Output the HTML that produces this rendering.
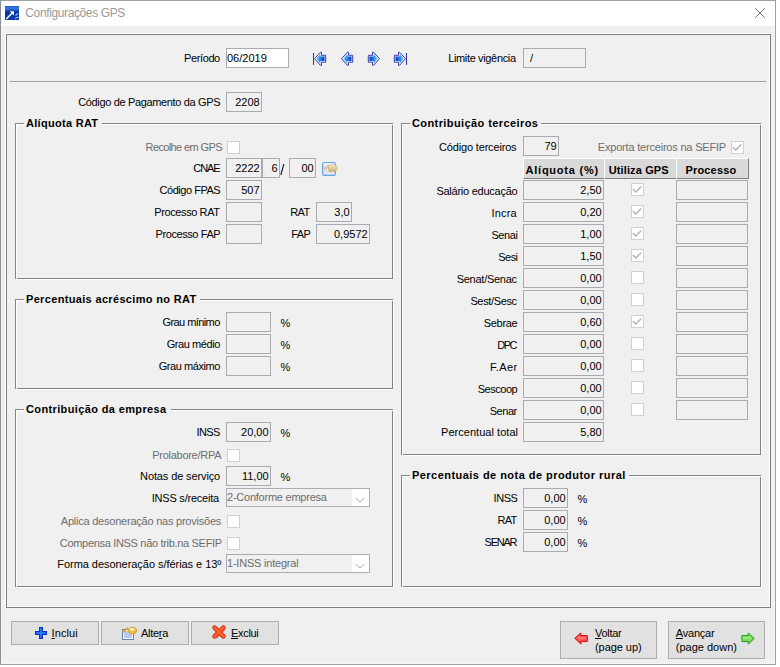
<!DOCTYPE html>
<html><head><meta charset="utf-8"><style>
*{margin:0;padding:0;box-sizing:content-box}
html,body{width:780px;height:667px;overflow:hidden;background:#fff}
body{position:relative;font-family:"Liberation Sans", sans-serif;font-size:11px;color:#000}
.win{position:absolute;left:0;top:0;width:774px;height:663px;border:1px solid #a0a0a0;border-left-color:#8a9099;background:#f0f0f0;box-shadow:inset 1px 0 0 #f6f6f6,inset -1px -1px 0 #f6f6f6}
.tb{position:absolute;left:1px;top:1px;width:774px;height:25px;background:#fff}
.t{position:absolute;line-height:13px;white-space:nowrap}
.bx{position:absolute;border:1px solid #adadad}
.cb{position:absolute;width:11px;height:11px;border:1px solid #d0d0d0;background:#fff}
.ic{position:absolute;overflow:visible}
.gg{position:absolute;border:1px solid #848484}
.gw{position:absolute;border:1px solid #fff}
.sep{position:absolute;height:1px;background:#a0a0a0}
.hc{position:absolute;background:#d9d9d9;border-top:1px solid #fff;border-left:1px solid #fff;border-bottom:1px solid #808080}
.btn{position:absolute;border:1px solid #adadad;background:#e1e1e1}
</style></head><body>
<div class="win"></div>
<div class="tb"></div>
<svg class="ic" style="left:5px;top:6px" width="15" height="15" viewBox="0 0 15 15">
<defs><linearGradient id="tg" x1="0" y1="0" x2="0" y2="1"><stop offset="0" stop-color="#1850c8"/><stop offset="0.12" stop-color="#3a78e0"/><stop offset="0.3" stop-color="#2a64d0"/><stop offset="0.36" stop-color="#0838a8"/><stop offset="1" stop-color="#0a3aa8"/></linearGradient></defs>
<rect x="0" y="0" width="14" height="14" fill="url(#tg)"/>
<path d="M1.2 13 L7.5 6.7" stroke="#fff" stroke-width="1.5"/>
<path d="M4.8 5.2 L9 5.2 L9 9.4 Z" fill="#fff"/>
<path d="M10.5 9.5 L13 7.5 M10 12.5 L13.5 11" stroke="#a8c4f0" stroke-width="1.2"/>
</svg>
<svg class="ic" style="left:755px;top:8px" width="11" height="11"><path d="M0.3 0.3 L9.7 9.7 M9.7 0.3 L0.3 9.7" stroke="#707070" stroke-width="1"/></svg>
<div style="position:absolute;left:5px;top:33px;width:763px;height:572px;border:1px solid #fff"></div>
<div style="position:absolute;left:6px;top:34px;width:763px;height:572px;border:1px solid #7f7f7f"></div>
<div class="t" style="left:25.30px;top:7px;color:#9a9a9a;letter-spacing:-0.378px;font-size:12px;">Configurações GPS</div>
<div class="t" style="left:184.10px;top:52px;color:#000;letter-spacing:-0.402px;">Período</div>
<div class="bx" style="left:226px;top:48px;width:61px;height:18px;background:#fff;border-color:#abadb3"></div>
<div class="t" style="left:227.00px;top:52px;color:#000;">06/2019</div>
<svg class="ic" style="left:312px;top:51px" width="16" height="16" viewBox="0 0 16 16"><defs>
<linearGradient id="ag" x1="0" y1="0" x2="1" y2="0"><stop offset="0" stop-color="#9ad0ff"/><stop offset="0.4" stop-color="#3a90f0"/><stop offset="1" stop-color="#0038c0"/></linearGradient>
<linearGradient id="agr" x1="1" y1="0" x2="0" y2="0"><stop offset="0" stop-color="#9ad0ff"/><stop offset="0.4" stop-color="#3a90f0"/><stop offset="1" stop-color="#0038c0"/></linearGradient>
</defs><path d="M1.5 2 V14" stroke="#3c3ca8" stroke-width="1.1"/><path d="M2.5 7.7 L8.5 1.2 L9.5 1.2 L9.5 4.3 L13.7 4.3 L13.7 11.2 L9.5 11.2 L9.5 14.4 L8.5 14.4 Z" fill="#e6f2ff" stroke="#3c3ca8" stroke-width="1" stroke-linejoin="miter"/><path d="M4.2 7.7 L8.3 3.3 L8.3 5.5 L12.5 5.5 L12.5 10 L8.3 10 L8.3 12.2 Z" fill="url(#ag)"/></svg>
<svg class="ic" style="left:339px;top:51px" width="16" height="16" viewBox="0 0 16 16"><path d="M2.5 7.7 L8.5 1.2 L9.5 1.2 L9.5 4.3 L13.7 4.3 L13.7 11.2 L9.5 11.2 L9.5 14.4 L8.5 14.4 Z" fill="#e6f2ff" stroke="#3c3ca8" stroke-width="1" stroke-linejoin="miter"/><path d="M4.2 7.7 L8.3 3.3 L8.3 5.5 L12.5 5.5 L12.5 10 L8.3 10 L8.3 12.2 Z" fill="url(#ag)"/></svg>
<svg class="ic" style="left:366px;top:51px" width="16" height="16" viewBox="0 0 16 16"><path d="M13.5 7.7 L7.5 1.2 L6.5 1.2 L6.5 4.3 L2.3 4.3 L2.3 11.2 L6.5 11.2 L6.5 14.4 L7.5 14.4 Z" fill="#e6f2ff" stroke="#3c3ca8" stroke-width="1" stroke-linejoin="miter"/><path d="M11.8 7.7 L7.7 3.3 L7.7 5.5 L3.5 5.5 L3.5 10 L7.7 10 L7.7 12.2 Z" fill="url(#agr)"/></svg>
<svg class="ic" style="left:392px;top:51px" width="16" height="16" viewBox="0 0 16 16"><path d="M13.5 7.7 L7.5 1.2 L6.5 1.2 L6.5 4.3 L2.3 4.3 L2.3 11.2 L6.5 11.2 L6.5 14.4 L7.5 14.4 Z" fill="#e6f2ff" stroke="#3c3ca8" stroke-width="1" stroke-linejoin="miter"/><path d="M11.8 7.7 L7.7 3.3 L7.7 5.5 L3.5 5.5 L3.5 10 L7.7 10 L7.7 12.2 Z" fill="url(#agr)"/><path d="M14.5 2 V14" stroke="#3c3ca8" stroke-width="1.1"/></svg>
<div class="t" style="left:448.20px;top:52px;color:#000;letter-spacing:-0.353px;">Limite vigência</div>
<div class="bx" style="left:523px;top:48px;width:61px;height:18px;background:#f0f0f0;border-color:#a9abb0"></div>
<div class="t" style="left:530.00px;top:52px;color:#000;">/</div>
<div class="sep" style="left:10px;top:81px;width:756px"></div>
<div class="t" style="left:78.20px;top:96px;color:#000;letter-spacing:-0.348px;">Código de Pagamento da GPS</div>
<div class="bx" style="left:226px;top:92px;width:34px;height:18px;background:#f0f0f0;border-color:#a9abb0"></div>
<div class="t" style="left:235.15px;top:96px;color:#000;">2208</div>
<div class="gg" style="left:15px;top:123px;width:376px;height:154px"></div>
<div class="gw" style="left:16px;top:124px;width:376px;height:154px"></div>
<div style="position:absolute;left:24px;top:120px;width:78px;height:6px;background:#f0f0f0"></div>
<div class="t" style="left:26.00px;top:117px;color:#000;font-weight:bold;letter-spacing:0.289px;">Alíquota RAT</div>
<div class="t" style="left:145.60px;top:141px;color:#6d6d6d;letter-spacing:-0.619px;">Recolhe em GPS</div>
<div class="cb" style="left:227px;top:141px"></div>
<div class="t" style="left:193.30px;top:162px;color:#000;letter-spacing:-1.075px;">CNAE</div>
<div class="bx" style="left:226px;top:158px;width:34px;height:18px;background:#f0f0f0;border-color:#a9abb0"></div>
<div class="t" style="left:235.15px;top:162px;color:#000;">2222</div>
<div class="bx" style="left:262px;top:158px;width:16px;height:18px;background:#f0f0f0;border-color:#a9abb0"></div>
<div class="t" style="left:271.50px;top:162px;color:#000;">6</div>
<svg class="ic" style="left:278px;top:162px" width="8" height="16"><path d="M5.9 2 L2.8 13" stroke="#101030" stroke-width="1.1"/></svg>
<div class="bx" style="left:289px;top:158px;width:25px;height:18px;background:#f0f0f0;border-color:#a9abb0"></div>
<div class="t" style="left:301.38px;top:162px;color:#000;">00</div>
<svg class="ic" style="left:322px;top:162px" width="14" height="14" viewBox="0 0 14 14"><defs><linearGradient id="hb" x1="0" y1="0" x2="0" y2="1"><stop offset="0" stop-color="#dfe4f6"/><stop offset="1" stop-color="#ece0ee"/></linearGradient>
<linearGradient id="hh" x1="0" y1="0" x2="0" y2="1"><stop offset="0" stop-color="#f4e8c8"/><stop offset="1" stop-color="#cdb070"/></linearGradient></defs>
<rect x="0.6" y="0.6" width="12.8" height="12.8" rx="1.6" fill="url(#hb)" stroke="#5aaae8" stroke-width="1.2"/>
<rect x="1.5" y="1.3" width="11" height="1.4" fill="#f4f8ff"/>
<path d="M2.3 7.2 L7 3.8" stroke="#d4b878" stroke-width="2.4" stroke-dasharray="1 0.6"/>
<ellipse cx="10.8" cy="6" rx="4.4" ry="3.6" fill="url(#hh)" stroke="#c8a868" stroke-width="0.5"/>
<path d="M6.5 8.5 L9 10" stroke="#c8a868" stroke-width="1.2"/></svg>
<div class="t" style="left:159.60px;top:184px;color:#000;letter-spacing:-0.479px;">Código FPAS</div>
<div class="bx" style="left:226px;top:180px;width:34px;height:18px;background:#f0f0f0;border-color:#a9abb0"></div>
<div class="t" style="left:241.26px;top:184px;color:#000;">507</div>
<div class="t" style="left:154.30px;top:206px;color:#000;letter-spacing:-0.398px;">Processo RAT</div>
<div class="bx" style="left:226px;top:202px;width:34px;height:18px;background:#f0f0f0;border-color:#a9abb0"></div>
<div class="t" style="left:290.30px;top:206px;color:#000;letter-spacing:-0.632px;">RAT</div>
<div class="bx" style="left:316px;top:202px;width:34px;height:18px;background:#f0f0f0;border-color:#a9abb0"></div>
<div class="t" style="left:334.33px;top:206px;color:#000;">3,0</div>
<div class="t" style="left:155.50px;top:228px;color:#000;letter-spacing:-0.414px;">Processo FAP</div>
<div class="bx" style="left:226px;top:224px;width:34px;height:18px;background:#f0f0f0;border-color:#a9abb0"></div>
<div class="t" style="left:291.30px;top:228px;color:#000;letter-spacing:-0.625px;">FAP</div>
<div class="bx" style="left:316px;top:224px;width:52px;height:18px;background:#f0f0f0;border-color:#a9abb0"></div>
<div class="t" style="left:333.97px;top:228px;color:#000;">0,9572</div>
<div class="gg" style="left:15px;top:299px;width:376px;height:88px"></div>
<div class="gw" style="left:16px;top:300px;width:376px;height:88px"></div>
<div style="position:absolute;left:24px;top:296px;width:176px;height:6px;background:#f0f0f0"></div>
<div class="t" style="left:26.00px;top:293px;color:#000;font-weight:bold;letter-spacing:0.335px;">Percentuais acréscimo no RAT</div>
<div class="t" style="left:162.50px;top:316px;color:#000;letter-spacing:-0.575px;">Grau mínimo</div>
<div class="bx" style="left:226px;top:312px;width:43px;height:18px;background:#f0f0f0;border-color:#a9abb0"></div>
<div class="t" style="left:280.40px;top:317px;color:#000;">%</div>
<div class="t" style="left:166.70px;top:338px;color:#000;letter-spacing:-0.428px;">Grau médio</div>
<div class="bx" style="left:226px;top:334px;width:43px;height:18px;background:#f0f0f0;border-color:#a9abb0"></div>
<div class="t" style="left:280.40px;top:339px;color:#000;">%</div>
<div class="t" style="left:158.70px;top:360px;color:#000;letter-spacing:-0.440px;">Grau máximo</div>
<div class="bx" style="left:226px;top:356px;width:43px;height:18px;background:#f0f0f0;border-color:#a9abb0"></div>
<div class="t" style="left:280.40px;top:361px;color:#000;">%</div>
<div class="gg" style="left:15px;top:409px;width:376px;height:176px"></div>
<div class="gw" style="left:16px;top:410px;width:376px;height:176px"></div>
<div style="position:absolute;left:24px;top:406px;width:147px;height:6px;background:#f0f0f0"></div>
<div class="t" style="left:26.00px;top:403px;color:#000;font-weight:bold;letter-spacing:0.368px;">Contribuição da empresa</div>
<div class="t" style="left:196.60px;top:426px;color:#000;letter-spacing:-0.612px;">INSS</div>
<div class="bx" style="left:226px;top:422px;width:43px;height:18px;background:#f0f0f0;border-color:#a9abb0"></div>
<div class="t" style="left:241.09px;top:426px;color:#000;">20,00</div>
<div class="t" style="left:280.40px;top:427px;color:#000;">%</div>
<div class="t" style="left:152.20px;top:449px;color:#6d6d6d;letter-spacing:-0.268px;">Prolabore/RPA</div>
<div class="cb" style="left:227px;top:449px"></div>
<div class="t" style="left:140.10px;top:470px;color:#000;letter-spacing:-0.121px;">Notas de serviço</div>
<div class="bx" style="left:226px;top:466px;width:43px;height:18px;background:#f0f0f0;border-color:#a9abb0"></div>
<div class="t" style="left:241.91px;top:470px;color:#000;">11,00</div>
<div class="t" style="left:280.40px;top:471px;color:#000;">%</div>
<div class="t" style="left:151.70px;top:492px;color:#000;letter-spacing:-0.214px;">INSS s/receita</div>
<div class="bx" style="left:226px;top:488px;width:142px;height:17px;background:#f0f0f0;border-color:#abadb3"></div>
<div style="position:absolute;left:352px;top:489px;width:17px;height:17px;background:#fff"></div>
<svg class="ic" style="left:352px;top:489px" width="17" height="17"><path d="M4 9.5 L8 13 L12 9.5" fill="none" stroke="#a8a8a8" stroke-width="1"/></svg>
<div class="t" style="left:227.00px;top:491px;color:#6d6d6d;letter-spacing:-0.236px;">2-Conforme empresa</div>
<div class="t" style="left:60.80px;top:515px;color:#6d6d6d;letter-spacing:-0.227px;">Aplica desoneração nas provisões</div>
<div class="cb" style="left:227px;top:515px"></div>
<div class="t" style="left:59.80px;top:537px;color:#6d6d6d;letter-spacing:-0.316px;">Compensa INSS não trib.na SEFIP</div>
<div class="cb" style="left:227px;top:537px"></div>
<div class="t" style="left:57.30px;top:558px;color:#000;letter-spacing:-0.046px;">Forma desoneração s/férias e 13º</div>
<div class="bx" style="left:226px;top:554px;width:142px;height:17px;background:#f0f0f0;border-color:#abadb3"></div>
<div style="position:absolute;left:352px;top:555px;width:17px;height:17px;background:#fff"></div>
<svg class="ic" style="left:352px;top:555px" width="17" height="17"><path d="M4 9.5 L8 13 L12 9.5" fill="none" stroke="#a8a8a8" stroke-width="1"/></svg>
<div class="t" style="left:227.00px;top:557px;color:#6d6d6d;letter-spacing:-0.210px;">1-INSS integral</div>
<div class="gg" style="left:401px;top:123px;width:358px;height:330px"></div>
<div class="gw" style="left:402px;top:124px;width:358px;height:330px"></div>
<div style="position:absolute;left:410px;top:120px;width:131px;height:6px;background:#f0f0f0"></div>
<div class="t" style="left:412.00px;top:117px;color:#000;font-weight:bold;letter-spacing:0.408px;">Contribuição terceiros</div>
<div class="t" style="left:439.10px;top:141px;color:#000;letter-spacing:-0.173px;">Código terceiros</div>
<div class="bx" style="left:523px;top:136px;width:34px;height:18px;background:#f0f0f0;border-color:#a9abb0"></div>
<div class="t" style="left:544.38px;top:140px;color:#000;">79</div>
<div class="t" style="left:597.80px;top:141px;color:#6d6d6d;letter-spacing:-0.198px;">Exporta terceiros na SEFIP</div>
<div class="cb" style="left:731px;top:141px"></div>
<svg class="ic" style="left:731px;top:141px" width="13" height="13"><path d="M1.8 6 L4.8 9 L10.3 3.5" fill="none" stroke="#b4b4b4" stroke-width="1.4"/></svg>
<div class="hc" style="left:523px;top:158px;width:80px;height:19px;"></div>
<div class="t" style="left:525.50px;top:164px;color:#000;font-weight:bold;letter-spacing:0.773px;">Alíquota (%)</div>
<div class="hc" style="left:604px;top:158px;width:71px;height:19px;"></div>
<div class="t" style="left:608.65px;top:164px;color:#000;font-weight:bold;letter-spacing:0.136px;">Utiliza GPS</div>
<div class="hc" style="left:676px;top:158px;width:71px;height:19px;border-right:1px solid #808080;"></div>
<div class="t" style="left:685.60px;top:164px;color:#000;font-weight:bold;letter-spacing:0.142px;">Processo</div>
<div class="t" style="left:436.40px;top:185px;color:#000;letter-spacing:-0.246px;">Salário educação</div>
<div class="bx" style="left:523px;top:180px;width:79px;height:18px;background:#f0f0f0;border-color:#a9abb0"></div>
<div class="t" style="left:580.21px;top:184px;color:#000;">2,50</div>
<div class="cb" style="left:631px;top:183px"></div>
<svg class="ic" style="left:631px;top:183px" width="13" height="13"><path d="M1.8 6 L4.8 9 L10.3 3.5" fill="none" stroke="#b4b4b4" stroke-width="1.4"/></svg>
<div class="bx" style="left:676px;top:180px;width:70px;height:18px;background:#f0f0f0;border-color:#a9abb0"></div>
<div class="t" style="left:491.40px;top:207px;color:#000;letter-spacing:0.216px;">Incra</div>
<div class="bx" style="left:523px;top:202px;width:79px;height:18px;background:#f0f0f0;border-color:#a9abb0"></div>
<div class="t" style="left:580.21px;top:206px;color:#000;">0,20</div>
<div class="cb" style="left:631px;top:205px"></div>
<svg class="ic" style="left:631px;top:205px" width="13" height="13"><path d="M1.8 6 L4.8 9 L10.3 3.5" fill="none" stroke="#b4b4b4" stroke-width="1.4"/></svg>
<div class="bx" style="left:676px;top:202px;width:70px;height:18px;background:#f0f0f0;border-color:#a9abb0"></div>
<div class="t" style="left:491.40px;top:229px;color:#000;letter-spacing:-0.372px;">Senai</div>
<div class="bx" style="left:523px;top:224px;width:79px;height:18px;background:#f0f0f0;border-color:#a9abb0"></div>
<div class="t" style="left:580.21px;top:228px;color:#000;">1,00</div>
<div class="cb" style="left:631px;top:227px"></div>
<svg class="ic" style="left:631px;top:227px" width="13" height="13"><path d="M1.8 6 L4.8 9 L10.3 3.5" fill="none" stroke="#b4b4b4" stroke-width="1.4"/></svg>
<div class="bx" style="left:676px;top:224px;width:70px;height:18px;background:#f0f0f0;border-color:#a9abb0"></div>
<div class="t" style="left:498.30px;top:251px;color:#000;letter-spacing:-0.552px;">Sesi</div>
<div class="bx" style="left:523px;top:246px;width:79px;height:18px;background:#f0f0f0;border-color:#a9abb0"></div>
<div class="t" style="left:580.21px;top:250px;color:#000;">1,50</div>
<div class="cb" style="left:631px;top:249px"></div>
<svg class="ic" style="left:631px;top:249px" width="13" height="13"><path d="M1.8 6 L4.8 9 L10.3 3.5" fill="none" stroke="#b4b4b4" stroke-width="1.4"/></svg>
<div class="bx" style="left:676px;top:246px;width:70px;height:18px;background:#f0f0f0;border-color:#a9abb0"></div>
<div class="t" style="left:456.70px;top:273px;color:#000;letter-spacing:-0.259px;">Senat/Senac</div>
<div class="bx" style="left:523px;top:268px;width:79px;height:18px;background:#f0f0f0;border-color:#a9abb0"></div>
<div class="t" style="left:580.21px;top:272px;color:#000;">0,00</div>
<div class="cb" style="left:631px;top:271px"></div>
<div class="bx" style="left:676px;top:268px;width:70px;height:18px;background:#f0f0f0;border-color:#a9abb0"></div>
<div class="t" style="left:470.40px;top:295px;color:#000;letter-spacing:-0.353px;">Sest/Sesc</div>
<div class="bx" style="left:523px;top:290px;width:79px;height:18px;background:#f0f0f0;border-color:#a9abb0"></div>
<div class="t" style="left:580.21px;top:294px;color:#000;">0,00</div>
<div class="cb" style="left:631px;top:293px"></div>
<div class="bx" style="left:676px;top:290px;width:70px;height:18px;background:#f0f0f0;border-color:#a9abb0"></div>
<div class="t" style="left:483.70px;top:317px;color:#000;letter-spacing:-0.291px;">Sebrae</div>
<div class="bx" style="left:523px;top:312px;width:79px;height:18px;background:#f0f0f0;border-color:#a9abb0"></div>
<div class="t" style="left:580.21px;top:316px;color:#000;">0,60</div>
<div class="cb" style="left:631px;top:315px"></div>
<svg class="ic" style="left:631px;top:315px" width="13" height="13"><path d="M1.8 6 L4.8 9 L10.3 3.5" fill="none" stroke="#b4b4b4" stroke-width="1.4"/></svg>
<div class="bx" style="left:676px;top:312px;width:70px;height:18px;background:#f0f0f0;border-color:#a9abb0"></div>
<div class="t" style="left:497.20px;top:339px;color:#000;letter-spacing:-1.440px;">DPC</div>
<div class="bx" style="left:523px;top:334px;width:79px;height:18px;background:#f0f0f0;border-color:#a9abb0"></div>
<div class="t" style="left:580.21px;top:338px;color:#000;">0,00</div>
<div class="cb" style="left:631px;top:337px"></div>
<div class="bx" style="left:676px;top:334px;width:70px;height:18px;background:#f0f0f0;border-color:#a9abb0"></div>
<div class="t" style="left:489.90px;top:361px;color:#000;letter-spacing:0.422px;">F.Aer</div>
<div class="bx" style="left:523px;top:356px;width:79px;height:18px;background:#f0f0f0;border-color:#a9abb0"></div>
<div class="t" style="left:580.21px;top:360px;color:#000;">0,00</div>
<div class="cb" style="left:631px;top:359px"></div>
<div class="bx" style="left:676px;top:356px;width:70px;height:18px;background:#f0f0f0;border-color:#a9abb0"></div>
<div class="t" style="left:477.70px;top:383px;color:#000;letter-spacing:-0.465px;">Sescoop</div>
<div class="bx" style="left:523px;top:378px;width:79px;height:18px;background:#f0f0f0;border-color:#a9abb0"></div>
<div class="t" style="left:580.21px;top:382px;color:#000;">0,00</div>
<div class="cb" style="left:631px;top:381px"></div>
<div class="bx" style="left:676px;top:378px;width:70px;height:18px;background:#f0f0f0;border-color:#a9abb0"></div>
<div class="t" style="left:489.70px;top:405px;color:#000;letter-spacing:-0.447px;">Senar</div>
<div class="bx" style="left:523px;top:400px;width:79px;height:18px;background:#f0f0f0;border-color:#a9abb0"></div>
<div class="t" style="left:580.21px;top:404px;color:#000;">0,00</div>
<div class="cb" style="left:631px;top:403px"></div>
<div class="bx" style="left:676px;top:400px;width:70px;height:18px;background:#f0f0f0;border-color:#a9abb0"></div>
<div class="t" style="left:441.00px;top:426px;color:#000;letter-spacing:0.041px;">Percentual total</div>
<div class="bx" style="left:523px;top:422px;width:79px;height:18px;background:#f0f0f0;border-color:#a9abb0"></div>
<div class="t" style="left:580.21px;top:426px;color:#000;">5,80</div>
<div class="gg" style="left:401px;top:475px;width:358px;height:110px"></div>
<div class="gw" style="left:402px;top:476px;width:358px;height:110px"></div>
<div style="position:absolute;left:410px;top:472px;width:219px;height:6px;background:#f0f0f0"></div>
<div class="t" style="left:412.00px;top:469px;color:#000;font-weight:bold;letter-spacing:0.457px;">Percentuais de nota de produtor rural</div>
<div class="t" style="left:493.60px;top:492px;color:#000;letter-spacing:-0.479px;">INSS</div>
<div class="bx" style="left:523px;top:488px;width:43px;height:18px;background:#f0f0f0;border-color:#a9abb0"></div>
<div class="t" style="left:544.21px;top:492px;color:#000;">0,00</div>
<div class="t" style="left:577.60px;top:493px;color:#000;">%</div>
<div class="t" style="left:497.50px;top:514px;color:#000;letter-spacing:-0.732px;">RAT</div>
<div class="bx" style="left:523px;top:510px;width:43px;height:18px;background:#f0f0f0;border-color:#a9abb0"></div>
<div class="t" style="left:544.21px;top:514px;color:#000;">0,00</div>
<div class="t" style="left:577.60px;top:515px;color:#000;">%</div>
<div class="t" style="left:484.60px;top:536px;color:#000;letter-spacing:-1.264px;">SENAR</div>
<div class="bx" style="left:523px;top:532px;width:43px;height:18px;background:#f0f0f0;border-color:#a9abb0"></div>
<div class="t" style="left:544.21px;top:536px;color:#000;">0,00</div>
<div class="t" style="left:577.60px;top:537px;color:#000;">%</div>
<div class="btn" style="left:11px;top:621px;width:86px;height:22px"></div>
<div class="btn" style="left:101px;top:621px;width:86px;height:22px"></div>
<div class="btn" style="left:191px;top:621px;width:86px;height:22px"></div>
<div class="btn" style="left:560px;top:621px;width:95px;height:36px"></div>
<div class="btn" style="left:668px;top:621px;width:95px;height:36px"></div>
<svg class="ic" style="left:35px;top:627px" width="12" height="12"><path d="M4 0 H8 V4 H12 V8 H8 V12 H4 V8 H0 V4 H4 Z" fill="#0834c4"/>
<path d="M5 1 H7 V5 H11 V7 H7 V11 H5 V7 H1 V5 H5 Z" fill="#1c64f0"/>
<path d="M6 2 V10 M2 6 H10" stroke="#3c88ff" stroke-width="0.8"/></svg>
<div class="t" style="left:51.60px;top:627px;color:#000;letter-spacing:0.093px;"><u>I</u>nclui</div>
<svg class="ic" style="left:121px;top:625px" width="17" height="16"><rect x="1.5" y="4.5" width="11" height="10" fill="#b8c8e8" stroke="#6a80a8"/>
<rect x="2.5" y="5.5" width="9" height="8" fill="none" stroke="#f4f8ff" stroke-width="1"/>
<path d="M2 7 L7 3" stroke="#d8a830" stroke-width="2.2"/>
<ellipse cx="11.5" cy="5.5" rx="4.2" ry="3.3" fill="#e8b840" stroke="#c89020" stroke-width="0.6"/>
<ellipse cx="11" cy="4.4" rx="2.6" ry="1.4" fill="#fff0b0"/></svg>
<div class="t" style="left:141.00px;top:627px;color:#000;letter-spacing:-0.284px;">Alte<u>r</u>a</div>
<svg class="ic" style="left:212px;top:625px" width="16" height="16"><path d="M2.6 2.6 L11.4 11.4 M11.4 2.6 L2.6 11.4" stroke="rgba(0,0,0,0.22)" stroke-width="4" transform="translate(1,1)"/>
<path d="M2.6 2.6 L11.4 11.4 M11.4 2.6 L2.6 11.4" stroke="#cc2000" stroke-width="4.6" stroke-linecap="round"/>
<path d="M2.6 2.6 L11.4 11.4 M11.4 2.6 L2.6 11.4" stroke="#ff5c2c" stroke-width="3" stroke-linecap="round"/></svg>
<div class="t" style="left:231.00px;top:627px;color:#000;letter-spacing:-0.320px;"><u>E</u>xclui</div>
<svg class="ic" style="left:574px;top:632px" width="15" height="14"><path d="M1.5 6.5 L7 1.5 L7 4 L13.5 4 L13.5 9.5 L7 9.5 L7 12 Z" fill="rgba(0,0,0,0.18)" transform="translate(0.8,0.8)"/>
<path d="M0.8 6.3 L6.8 1 L6.8 3.6 L13.2 3.6 L13.2 9.4 L6.8 9.4 L6.8 12 Z" fill="#ff5858" stroke="#e00000" stroke-width="1" stroke-linejoin="miter"/>
<path d="M4 6 L12 6" stroke="#ff9a9a" stroke-width="1"/></svg>
<div class="t" style="left:595.00px;top:627px;color:#000;letter-spacing:-0.293px;"><u>V</u>oltar</div>
<div class="t" style="left:595.00px;top:641px;color:#000;letter-spacing:-0.053px;">(page up)</div>
<div class="t" style="left:675.80px;top:627px;color:#000;letter-spacing:-0.215px;"><u>A</u>vançar</div>
<div class="t" style="left:675.80px;top:641px;color:#000;">(page down)</div>
<svg class="ic" style="left:741px;top:632px" width="15" height="14"><path d="M12.5 6.5 L7 1.5 L7 4 L0.5 4 L0.5 9.5 L7 9.5 L7 12 Z" fill="rgba(0,0,0,0.18)" transform="translate(0.8,0.8)"/>
<path d="M13.2 6.3 L7.2 1 L7.2 3.6 L0.8 3.6 L0.8 9.4 L7.2 9.4 L7.2 12 Z" fill="#78e058" stroke="#20a020" stroke-width="1" stroke-linejoin="miter"/>
<path d="M2 6 L10 6" stroke="#b0f890" stroke-width="1"/></svg>
</body></html>
